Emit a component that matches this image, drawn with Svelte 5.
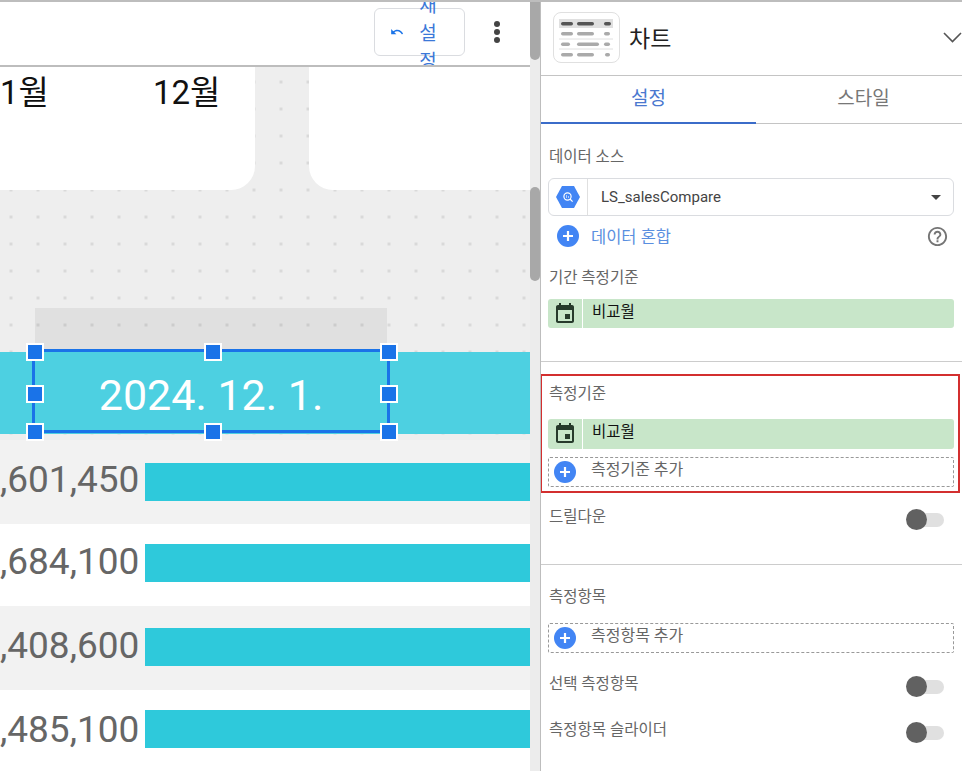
<script>
  const rows = [',601,450', ',684,100', ',408,600', ',485,100'];
  const handles = ['tl', 'tm', 'tr', 'ml', 'mr', 'bl', 'bm', 'br'];
  const eventPath = 'M17 12h-5v5h5v-5zM16 1v2H8V1H6v2H5c-1.11 0-1.99.9-1.99 2L3 19c0 1.1.89 2 2 2h14c1.1 0 2-.9 2-2V5c0-1.1-.9-2-2-2h-1V1h-2zm3 18H5V8h14v11z';
</script>

{#snippet plus(cls)}
  <svg class={cls} viewBox="0 0 22 22" aria-hidden="true">
    <circle cx="11" cy="11" r="11" fill="#4285f4" />
    <path d="M6 11h10M11 6v10" stroke="#fff" stroke-width="2.2" />
  </svg>
{/snippet}

{#snippet chip(label)}
  <div class="chip">
    <div class="chip-icon">
      <svg viewBox="0 0 24 24" width="24" height="24" aria-hidden="true"><path d={eventPath} fill="#263a2b" /></svg>
    </div>
    <span class="chip-text">{label}</span>
  </div>
{/snippet}

{#snippet dashed(label)}
  <div class="dashed">
    {@render plus('plus-small')}
    <span>{label}</span>
  </div>
{/snippet}

{#snippet toggleRow(label)}
  <div class="toggle-row">
    <span class="label">{label}</span>
    <div class="toggle"><span class="track"></span><span class="thumb"></span></div>
  </div>
{/snippet}

<div class="page">
  <div class="left">
    <div class="main">
      <div class="toolbar">
        <button class="reset">
          <svg viewBox="0 0 24 24" width="14" height="14" aria-hidden="true"><path fill="#1a73e8" d="M12.5 8c-2.65 0-5.05.99-6.9 2.6L2 7v9h9l-3.62-3.62c1.39-1.16 3.16-1.88 5.12-1.88 3.54 0 6.55 2.31 7.6 5.5l2.37-.78C21.08 11.03 17.15 8 12.5 8z" /></svg>
          <span class="reset-text">재설정</span>
        </button>
        <div class="more"><i></i><i></i><i></i></div>
      </div>
      <div class="canvas">
        <div class="cards">
          <div class="card first">
            <span class="m1">1월</span>
            <span class="m2">12월</span>
          </div>
          <div class="card second"></div>
        </div>
        <div class="band">
          <div class="ghost"></div>
          <div class="selection">
            <span>2024. 12. 1.</span>
            {#each handles as h}<b class="handle {h}"></b>{/each}
          </div>
        </div>
        <div class="rows">
          {#each rows as r}
            <div class="row">
              <span class="num">{r}</span>
              <span class="bar"></span>
            </div>
          {/each}
        </div>
      </div>
    </div>
    <div class="scroll">
      <span class="thumb-a"></span>
      <span class="thumb-b"></span>
    </div>
  </div>

  <aside class="panel">
    <header class="head">
      <div class="chart-icon">
        <svg viewBox="0 0 67 51" width="67" height="51" aria-hidden="true">
          <rect x="6" y="7" width="54" height="9" fill="#e0e0e0" />
          <g fill="#555">
            <rect x="8" y="10" width="12" height="3.5" rx="1.7" />
            <rect x="24" y="10" width="17" height="3.5" rx="1.7" />
            <rect x="51" y="10" width="7" height="3.5" rx="1.7" />
          </g>
          <g fill="#aaa">
            <rect x="8" y="20" width="12" height="3.5" rx="1.7" />
            <rect x="24" y="20" width="17" height="3.5" rx="1.7" />
            <rect x="51" y="20" width="6" height="3.5" rx="1.7" />
            <rect x="8" y="30.5" width="9" height="3.5" rx="1.7" />
            <rect x="24" y="30.5" width="22" height="3.5" rx="1.7" />
            <rect x="51" y="30.5" width="6" height="3.5" rx="1.7" />
            <rect x="8" y="41" width="12" height="3.5" rx="1.7" />
            <rect x="24" y="41" width="17" height="3.5" rx="1.7" />
            <rect x="52" y="41" width="5" height="3.5" rx="1.7" />
          </g>
          <path d="M6 27h54M6 37h54" stroke="#e0e0e0" />
        </svg>
      </div>
      <span class="title">차트</span>
      <svg class="chev" viewBox="0 0 19 11" width="19" height="11" aria-hidden="true"><path d="M1 1l8.5 8.5L18 1" fill="none" stroke="#555" stroke-width="1.6" /></svg>
    </header>

    <nav class="tabs">
      <div class="tab active">설정</div>
      <div class="tab">스타일</div>
    </nav>

    <section class="sec-a">
      <div class="label">데이터 소스</div>
      <div class="select">
        <div class="select-icon">
          <svg viewBox="0 0 24 22" width="24" height="22" aria-hidden="true">
            <path d="M6 0h12l6 11-6 11H6L0 11z" fill="#4285f4" />
            <circle cx="11.5" cy="10.5" r="3.6" fill="none" stroke="#fff" stroke-width="1.2" />
            <path d="M14 13l2.6 2.6" stroke="#fff" stroke-width="1.3" />
            <path d="M10.5 9v3M12.5 10v2" stroke="#cfe0fb" stroke-width=".8" />
          </svg>
        </div>
        <span class="select-text">LS_salesCompare</span>
        <span class="caret"></span>
      </div>
      <div class="blend">
        {@render plus('plus-big')}
        <span class="blend-text">데이터 혼합</span>
        <svg class="help" viewBox="0 0 24 24" width="23" height="23" aria-hidden="true"><path fill="#757575" d="M11 18h2v-2h-2v2zm1-16C6.48 2 2 6.48 2 12s4.48 10 10 10 10-4.48 10-10S17.52 2 12 2zm0 18c-4.41 0-8-3.59-8-8s3.59-8 8-8 8 3.59 8 8-3.59 8-8 8zm0-14c-2.21 0-4 1.79-4 4h2c0-1.1.9-2 2-2s2 .9 2 2c0 2-3 1.75-3 5h2c0-2.25 3-2.5 3-5 0-2.21-1.79-4-4-4z" /></svg>
      </div>
      <div class="label period">기간 측정기준</div>
      <div class="chip-wrap first-chip">{@render chip('비교월')}</div>
    </section>

    <section class="sec-b">
      <div class="redbox"></div>
      <div class="label">측정기준</div>
      <div class="chip-wrap second-chip">{@render chip('비교월')}</div>
      {@render dashed('측정기준 추가')}
      {@render toggleRow('드릴다운')}
    </section>

    <section class="sec-c">
      <div class="label">측정항목</div>
      {@render dashed('측정항목 추가')}
      {@render toggleRow('선택 측정항목')}
      {@render toggleRow('측정항목 슬라이더')}
    </section>
  </aside>
</div>

<style>
  :global(body) { margin: 0; background: #fff; overflow: hidden; }
  .page {
    width: 962px; height: 771px; box-sizing: border-box; overflow: hidden;
    display: flex; border-top: 2px solid #bdbdbd;
    font-family: Roboto, "Noto Sans CJK KR", sans-serif;
  }
  .left { width: 540px; flex: none; display: flex; }
  .main { width: 530px; flex: none; display: flex; flex-direction: column; overflow: hidden; }

  .toolbar {
    height: 63px; flex: none; box-sizing: content-box; overflow: hidden;
    border-bottom: 2px solid #bdbdbd; position: relative;
    display: flex; align-items: flex-start; justify-content: flex-end;
    padding-right: 30px; gap: 29px;
  }
  .reset {
    margin-top: 6px; width: 91px; height: 48px; box-sizing: border-box; flex: none;
    background: #fff; border: 1px solid #dadce0; border-radius: 6px;
    display: flex; align-items: center; padding: 0 0 0 15px; gap: 14px; font: inherit;
  }
  .reset-text {
    width: 20px; font-size: 19px; line-height: 28px; color: #3b78d8;
    word-break: break-all; text-align: center; flex: none; padding-top: 4px;
  }
  .more { display: flex; flex-direction: column; gap: 2px; margin-top: 19px; width: 6px; }
  .more i { width: 6px; height: 6px; border-radius: 50%; background: #444; display: block; }

  .scroll { width: 10px; flex: none; background: #ececec; display: flex; flex-direction: column; }
  .thumb-a { height: 58px; background: #a8a8a8; border-radius: 0 0 5px 5px; }
  .thumb-b { height: 94px; margin-top: 127px; background: #a8a8a8; border-radius: 5px; }

  .canvas {
    flex: 1; background-color: #eee;
    background-image: radial-gradient(circle at center, #d9d9d9 1.6px, transparent 2px);
    background-size: 27px 27px; background-position: -2.5px 1.5px;
  }
  .cards { display: flex; gap: 54px; height: 123px; }
  .card { background: #fff; }
  .first { width: 255px; border-radius: 0 0 24px 0; display: flex; align-items: flex-start; font-size: 33px; color: #111; line-height: 52px; }
  .second { flex: 1; border-radius: 0 0 0 24px; }
  .m1 { width: 153px; flex: none; }

  .band { margin-top: 162px; height: 82px; background: #4dd0e1; position: relative; }
  .ghost { position: absolute; left: 35px; top: -44px; width: 352px; height: 44px; background: rgba(0,0,0,.06); }
  .selection {
    position: absolute; left: 32px; top: -3px; width: 358px; height: 84px; box-sizing: border-box;
    border: 3px solid #1a73e8; display: flex; align-items: center; justify-content: center;
    color: #fff; font-size: 43px; padding-top: 8px;
  }
  .handle {
    position: absolute; width: 18px; height: 18px; box-sizing: border-box;
    background: #1a73e8; border: 2px solid #fff;
  }
  .tl, .ml, .bl { left: -9px; }
  .tm, .bm { left: 169px; }
  .tr, .mr, .br { right: -11px; }
  .tl, .tm, .tr { top: -9px; }
  .ml, .mr { top: 33px; }
  .bl, .bm, .br { bottom: -11px; }

  .rows { margin-top: 6px; }
  .row { height: 84px; display: flex; align-items: flex-start; background: #f2f2f2; overflow: hidden; box-sizing: border-box; }
  .row:nth-child(1) { padding-top: 23px; }
  .row:nth-child(2) { height: 82px; background: #fff; padding-top: 20px; }
  .row:nth-child(3) { padding-top: 22px; }
  .row:nth-child(4) { background: #fff; padding-top: 20px; }
  .num {
    width: 139px; flex: none; text-align: right; font-size: 37px; line-height: 38px; color: #666;
    white-space: nowrap; margin-top: -2px;
  }
  .row:nth-child(2) .num, .row:nth-child(3) .num { margin-top: -1px; }
  .row:nth-child(4) .num { margin-top: 1px; }
  .bar { margin-left: 6px; flex: 1; height: 38px; background: #2ec9db; }

  .panel { flex: 1; border-left: 1px solid #bdbdbd; box-sizing: border-box; min-width: 0; overflow: hidden; }
  .head { height: 74px; box-sizing: border-box; border-bottom: 1px solid #c4c4c4; display: flex; align-items: flex-start; position: relative; }
  .chart-icon {
    margin: 10px 0 0 12px; width: 67px; height: 51px; box-sizing: border-box;
    border: 1px solid #e0e0e0; border-radius: 8px; overflow: hidden; flex: none;
  }
  .chart-icon svg { margin: -1px; display: block; }
  .title { margin: 21px 0 0 9px; font-size: 23px; line-height: 33px; color: #222; }
  .chev { position: absolute; right: 0; top: 30px; }

  .tabs { display: grid; grid-template-columns: 215px 215px; height: 48px; box-sizing: border-box; border-bottom: 1px solid #c4c4c4; }
  .tab { text-align: center; font-size: 19px; line-height: 46px; color: #777; box-sizing: border-box; }
  .tab.active { color: #4a78cf; border-bottom: 2px solid #3b6cc9; height: 48px; }

  .label { font-size: 15.5px; line-height: 20px; color: #666; height: 20px; box-sizing: border-box; padding: 1px 0 0 1px; }
  .sec-a { padding: 22px 8px 33px 7px; border-bottom: 1px solid #ccc; }
  .select {
    margin-top: 12px; height: 38px; box-sizing: border-box; display: flex; align-items: center;
    border: 1px solid #dadce0; border-radius: 6px;
  }
  .select-icon { width: 39px; height: 36px; flex: none; box-sizing: border-box; border-right: 1px solid #e0e0e0; display: flex; align-items: center; justify-content: center; padding-right: 1px; }
  .select-text { margin-left: 13px; font-size: 15px; color: #444; flex: 1; }
  .caret { width: 0; height: 0; border: 5.5px solid transparent; border-top: 5.5px solid #444; border-bottom: 0; margin-right: 12px; }
  .blend { margin-top: 9px; height: 22px; display: flex; align-items: center; }
  .plus-big { width: 22px; height: 22px; margin-left: 9px; flex: none; }
  .blend-text { margin-left: 12px; font-size: 16.5px; color: #5a8fe0; flex: 1; }
  .help { margin-right: 5px; }
  .period { margin-top: 20px; }
  .first-chip { margin-top: 12px; }

  .chip { height: 29px; background: #c8e6c9; border-radius: 3px; display: flex; align-items: center; }
  .second-chip .chip { height: 30px; }
  .chip-icon { width: 34px; height: 100%; flex: none; border-right: 1px solid #fff; box-sizing: content-box; display: flex; align-items: center; justify-content: center; }
  .chip-text { margin-left: 9px; font-size: 15.5px; color: #111; margin-bottom: 7px; }
  .second-chip .chip-text { margin-bottom: 9px; }

  .sec-b { position: relative; padding: 21px 8px 38px 7px; border-bottom: 1px solid #ccc; }
  .redbox { position: absolute; left: -1px; top: 12px; width: 420px; height: 119px; box-sizing: border-box; border: 2px solid #d32f2f; pointer-events: none; }
  .second-chip { margin-top: 16px; }
  .dashed {
    margin-top: 8px; height: 30px; box-sizing: border-box; border: 1px dashed #999; border-radius: 2px;
    display: flex; align-items: center; font-size: 16px; color: #666;
  }
  .plus-small { width: 22px; height: 22px; margin-left: 5px; flex: none; }
  .dashed span { margin-left: 15px; margin-bottom: 8px; }

  .toggle-row { margin-top: 19px; height: 20px; display: flex; justify-content: space-between; align-items: flex-start; }
  .toggle { width: 38px; height: 21px; margin: 3px 10px 0 0; position: relative; flex: none; }
  .track { position: absolute; right: 0; top: 3.5px; width: 30px; height: 14px; border-radius: 7px; background: #e0e0e0; }
  .thumb { position: absolute; left: 0; top: 0; width: 21px; height: 21px; border-radius: 50%; background: #616161; }

  .sec-c { padding: 21px 8px 0 7px; }
  .sec-c .dashed { margin-top: 17px; }
  .sec-c .toggle-row { margin-top: 20px; }
  .sec-c .toggle-row:last-child { margin-top: 26px; }
</style>
